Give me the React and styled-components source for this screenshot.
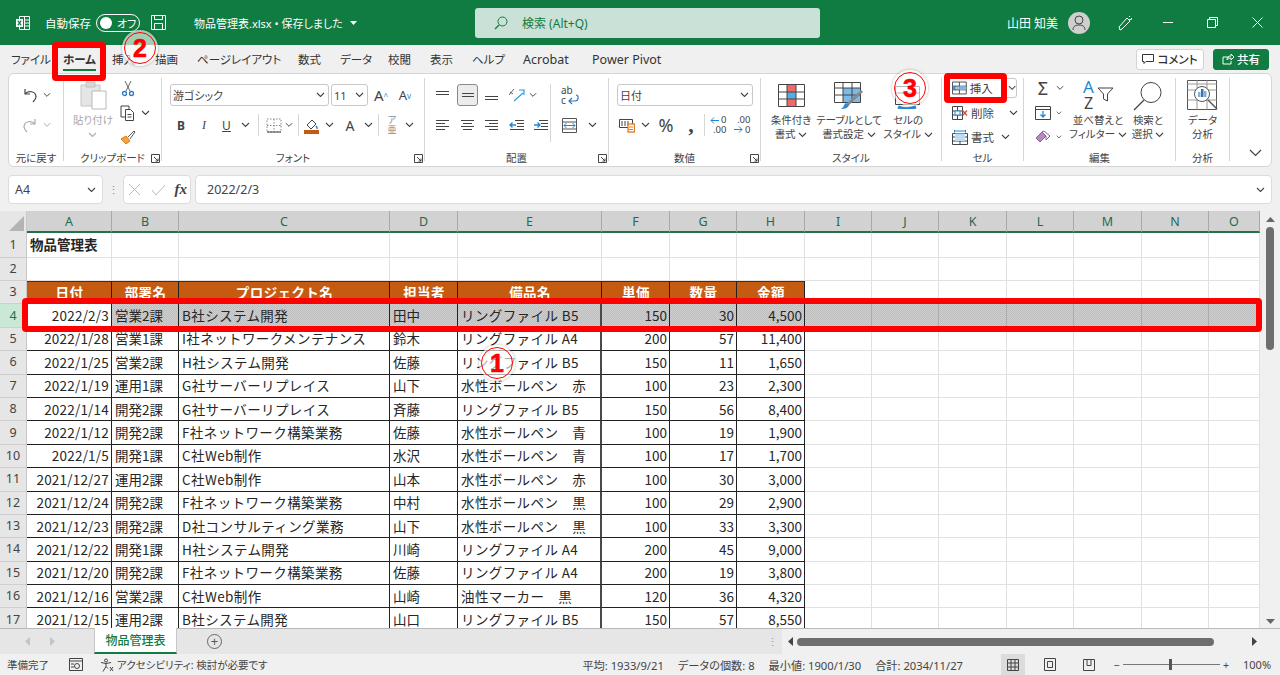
import React from 'react';
import styled, { createGlobalStyle } from 'styled-components';

const FONT = '"Noto Sans", "Noto Sans CJK JP", sans-serif';
const GRID_FONT = '"Noto Sans CJK JP", sans-serif';
const GREEN = '#107c41';
const RED = '#ff0000';

const COLUMNS = ['A', 'B', 'C', 'D', 'E', 'F', 'G', 'H', 'I', 'J', 'K', 'L', 'M', 'N', 'O'];
const HEADERS = ['日付', '部署名', 'プロジェクト名', '担当者', '備品名', '単価', '数量', '金額'];
const ROWS = [
  ['2022/2/3', '営業2課', 'B社システム開発', '田中', 'リングファイル B5', '150', '30', '4,500'],
  ['2022/1/28', '営業1課', 'I社ネットワークメンテナンス', '鈴木', 'リングファイル A4', '200', '57', '11,400'],
  ['2022/1/25', '営業2課', 'H社システム開発', '佐藤', 'リングファイル B5', '150', '11', '1,650'],
  ['2022/1/19', '運用1課', 'G社サーバーリプレイス', '山下', '水性ボールペン　赤', '100', '23', '2,300'],
  ['2022/1/14', '開発2課', 'G社サーバーリプレイス', '斉藤', 'リングファイル B5', '150', '56', '8,400'],
  ['2022/1/12', '開発2課', 'F社ネットワーク構築業務', '佐藤', '水性ボールペン　青', '100', '19', '1,900'],
  ['2022/1/5', '開発1課', 'C社Web制作', '水沢', '水性ボールペン　青', '100', '17', '1,700'],
  ['2021/12/27', '運用2課', 'C社Web制作', '山本', '水性ボールペン　赤', '100', '30', '3,000'],
  ['2021/12/24', '開発2課', 'F社ネットワーク構築業務', '中村', '水性ボールペン　黒', '100', '29', '2,900'],
  ['2021/12/23', '開発2課', 'D社コンサルティング業務', '山下', '水性ボールペン　黒', '100', '33', '3,300'],
  ['2021/12/22', '開発1課', 'H社システム開発', '川崎', 'リングファイル A4', '200', '45', '9,000'],
  ['2021/12/20', '開発2課', 'F社ネットワーク構築業務', '佐藤', 'リングファイル A4', '200', '19', '3,800'],
  ['2021/12/16', '営業2課', 'C社Web制作', '山崎', '油性マーカー　黒', '120', '36', '4,320'],
  ['2021/12/15', '運用2課', 'B社システム開発', '山口', 'リングファイル B5', '150', '57', '8,550'],
];
const RIGHT_ALIGNED = [0, 5, 6, 7];
const TABS = [
  ['ファイル', 52], ['ホーム', 49], ['挿入', 43], ['描画', 42], ['ページ レイアウト', 101], ['数式', 42],
  ['データ', 48], ['校閲', 42], ['表示', 42], ['ヘルプ', 51], ['Acrobat', 69, true], ['Power Pivot', 80, true],
];

const GlobalStyle = createGlobalStyle`
  html, body { margin: 0; padding: 0; background: #f0f0f0; }
  body { font-family: ${FONT}; }
`;

/* icons */
const Chev = ({ c = '#444' }) => (
  <svg width="9" height="6" viewBox="0 0 9 6"><path d="M1 1l3.5 3.5L8 1" fill="none" stroke={c} strokeWidth="1.1" /></svg>
);
const I = ({ w = 16, h = 16, children }) => (
  <svg width={w} height={h} viewBox={`0 0 ${w} ${h}`} fill="none" stroke="#444" strokeWidth="1">{children}</svg>
);
const Launcher = () => (
  <I w={9} h={9}><path d="M.5 8.5v-8h8v8zM3 3l4 4M7 4.5V7H4.5" strokeWidth="1" /></I>
);
const Lines = ({ rows }) => (
  <I w={16} h={14}>{rows.map(([y, x1, x2]) => <path key={y} d={`M${x1} ${y}.5H${x2}`} />)}</I>
);
const ExcelLogo = () => (
  <svg width="16" height="16" viewBox="0 0 16 16" fill="none" stroke="#fff">
    <path d="M4.5 1.5h10v13h-10zM9.5 1.5v13M9.5 5h5M9.5 8h5M9.5 11h5" />
    <rect x="1" y="4" width="7" height="8" fill="#fff" stroke="none" />
    <path d="M2.8 5.6l3.4 4.8M6.2 5.6l-3.4 4.8" stroke={GREEN} strokeWidth="1.2" />
  </svg>
);
const SaveIcon = () => (
  <svg width="15" height="15" viewBox="0 0 15 15" fill="none" stroke="#fff">
    <path d="M.5.5h14v14H.5zM3.5.5v4h8v-4M3.5 14.5v-6h8v6" />
  </svg>
);

const PasteIcon = () => (
  <svg width="27" height="29" viewBox="0 0 27 29" fill="none">
    <path d="M1 4h19v21H1z" fill="#e6e6e6" stroke="#c4c4c4" />
    <path d="M6 1h9v5H6z" fill="#d8d8d8" stroke="#c0c0c0" />
    <path d="M12 10h14v18H12z" fill="#fff" stroke="#b8b8b8" />
  </svg>
);
const CutIcon = () => (
  <I w={14} h={17}>
    <path d="M4 1l5 10M10 1L5 11" stroke="#666" />
    <circle cx="3.5" cy="13.5" r="2" stroke="#2b78c6" strokeWidth="1.3" />
    <circle cx="10.5" cy="13.5" r="2" stroke="#2b78c6" strokeWidth="1.3" />
  </I>
);
const CopyIcon = () => (
  <I w={16} h={16}>
    <path d="M1 1h8v11H1z" /><path d="M5.5 4.5h5l3 3v8h-8z" fill="#fff" /><path d="M7.5 9.5h4M7.5 12h4" />
  </I>
);
const BrushIcon = () => (
  <I w={16} h={16}>
    <path d="M1 10l5-3 4 5-4 3z" fill="#f3a33b" stroke="#d9791a" />
    <path d="M8 8l6-6 1 1-5 7" stroke="#555" />
  </I>
);
const BordersIcon = () => (
  <I w={16} h={15}>
    <path d="M1 1h14v13H1zM8 1v13M1 7.500h14" stroke="#888" strokeDasharray="1.5 1.5" />
    <path d="M1 14h14" stroke="#444" />
  </I>
);
const FillIcon = () => (
  <I w={16} h={17}>
    <path d="M3 8l5-5 4 4-5 5z" />
    <path d="M12 9c1 1.500 1.500 2 1 3" stroke="#2b78c6" strokeWidth="1.4" />
    <rect x="0" y="13" width="15" height="4" fill="#c55a11" stroke="none" />
  </I>
);
const RubyIcon = () => (
  <span style={{ fontSize: 9, lineHeight: '10px', color: '#888', textAlign: 'center' }}>ア<br />亜</span>
);
const OrientIcon = () => (
  <I w={17} h={16}>
    <path d="M3 11L12 3" stroke="#2b9ad6" strokeWidth="1.2" transform="translate(3 3)" />
    <path d="M11 3h5v5" stroke="#2b9ad6" strokeWidth="1.2" />
    <path d="M1 8l5-6M2 5l3 2" stroke="#666" />
  </I>
);
const IndentIcon = ({ out }) => (
  <I w={15} h={12}>
    <path d="M6 1.500h9M8 4.500h7M8 7.500h7M1 10.500h14" />
    <path d={out ? 'M7 6H1M3.500 3.500L1 6l2.500 2.500' : 'M1 6h6M4.500 3.500L7 6 4.500 8.500'} stroke="#1e88d8" strokeWidth="1.3" />
  </I>
);
const WrapIcon = () => (
  <span style={{ fontSize: 10, lineHeight: '10px', color: '#444', position: 'relative', width: 18, height: 20 }}>
    ab<br />c
    <svg width="12" height="11" viewBox="0 0 12 11" fill="none" stroke="#2b78c6" strokeWidth="1.2" style={{ position: 'absolute', right: 0, bottom: 0 }}>
      <path d="M9 1c3 0 3 6-1 6H2M5 4L2 7l3 3" />
    </svg>
  </span>
);
const MergeIcon = () => (
  <I w={15} h={15}>
    <path d="M.5 .5h14v14H.5zM.5 4h14M.5 11h14" stroke="#555" />
    <path d="M2 7.500h11M4.500 5L2 7.500 4.500 10M10.500 5L13 7.500 10.500 10" stroke="#1e88d8" />
  </I>
);
const MoneyIcon = () => (
  <I w={16} h={16}>
    <path d="M.5 2.500h13v8H.5z" /><path d="M3 4v5M6 4v5M9 4v5" />
    <rect x="9" y="7" width="6.500" height="8" fill="#fff" stroke="#e07a1f" strokeWidth="1.300" />
    <path d="M10 10h4M10 12.500h4" stroke="#e07a1f" />
  </I>
);
const DecimalIcon = ({ inc }) => (
  <span style={{ position: 'relative', width: 17, height: 20, fontSize: 9.5, lineHeight: '10px', color: '#444', textAlign: 'right', display: 'block' }}>
    {inc ? <>0<br />.00</> : <>.00<br />0</>}
    <svg width="9" height="7" viewBox="0 0 9 7" fill="none" stroke="#1e88d8" style={{ position: 'absolute', left: 0, top: inc ? 2 : 11 }}>
      <path d={inc ? 'M9 3.500H1M4 .5L1 3.500 4 6.500' : 'M0 3.500h8M5 .5l3 3-3 3'} />
    </svg>
  </span>
);
const CondIcon = () => (
  <svg width="27" height="23" viewBox="0 0 27 23" fill="none">
    <rect x="9" y="1" width="9" height="7" fill="#f06a6a" />
    <rect x="9" y="8" width="9" height="7" fill="#5fa8e0" />
    <rect x="9" y="15" width="9" height="7" fill="#f06a6a" />
    <path d="M.5.5h26v22H.5zM9 .5v22M18 .5v22M.5 8h26M.5 15h26" stroke="#444" />
  </svg>
);
const TableIcon = () => (
  <svg width="30" height="28" viewBox="0 0 30 28" fill="none">
    <rect x="9" y="6" width="18" height="14" fill="#7cbbe8" />
    <path d="M.5.5h26v20H.5zM9 .5v20M18 .5v20M.5 6h26M.5 13h26" stroke="#444" />
    <path d="M28 9L13 23" stroke="#888" strokeWidth="3" />
    <path d="M15 23c-1 3-4 4-8 4 2-1 3-3 4-6z" fill="#2b88d8" />
  </svg>
);
const CellStyleIcon = () => (
  <svg width="26" height="26" viewBox="0 0 26 26" fill="none">
    <path d="M.5 3.500h24v18H.5zM.5 10h24" stroke="#444" />
    <path d="M3 24c5 2 12 2 18 0" stroke="#2b88d8" strokeWidth="3" />
  </svg>
);
const InsertIcon = () => (
  <I w={16} h={14}>
    <path d="M.5 .5h15v13H.5zM8 .5v13M.5 5h15M.5 9h15" />
    <rect x="8" y="5" width="7" height="4" fill="#79b8e6" stroke="none" />
    <path d="M7 7H1.500M4 4.500L1.500 7 4 9.500" stroke="#1e88d8" strokeWidth="1.200" />
  </I>
);
const DeleteIcon = () => (
  <I w={16} h={14}>
    <path d="M.5 .5h10v13H.5zM.5 5h10M.5 9h10M5.500 .5v13" />
    <rect x="3" y="5" width="5" height="4" fill="#fff" stroke="#1e88d8" />
    <path d="M10.500 4.500l4.500 5M15 4.500l-4.500 5" stroke="#d9472b" strokeWidth="1.200" />
  </I>
);
const FormatIcon = () => (
  <I w={16} h={16}>
    <path d="M.5 4.500h15v11H.5zM.5 8h15M.5 12h15M8 4.500v11" />
    <rect x="3" y="4.500" width="10" height="7.500" fill="#bcdcf4" stroke="none" />
    <path d="M2.500 1v2.500M13.500 1v2.500M2.500 2h11" stroke="#1e88d8" />
  </I>
);
const FillDownIcon = () => (
  <I w={16} h={14}>
    <path d="M.5 .5h15v13H.5zM.5 3.500h15" />
    <path d="M8 5v6M5.500 8.500L8 11l2.500-2.500" stroke="#1e88d8" strokeWidth="1.300" />
  </I>
);
const EraserIcon = () => (
  <svg width="16" height="14" viewBox="0 0 16 14" fill="none">
    <path d="M1 8l6-6 4 4-6 6z" fill="#b48ac0" stroke="#8c5d9c" />
    <path d="M7 2l2-1 6 5-4 4-0-4z" fill="#fff" stroke="#8c5d9c" />
  </svg>
);
const SortIcon = () => (
  <span style={{ position: 'relative', width: 30, height: 30, display: 'block' }}>
    <span style={{ position: 'absolute', left: 0, top: -3, fontSize: 17, lineHeight: '17px', color: '#1e88d8' }}>A</span>
    <span style={{ position: 'absolute', left: 1, top: 14, fontSize: 16, lineHeight: '17px', color: '#444' }}>Z</span>
    <svg width="17" height="16" viewBox="0 0 17 16" fill="none" stroke="#444" style={{ position: 'absolute', left: 14, top: 6 }}>
      <path d="M1 1h15l-5.500 6v7l-4-2V7z" />
    </svg>
  </span>
);
const FindIcon = () => (
  <svg width="30" height="30" viewBox="0 0 30 30" fill="none" stroke="#444">
    <circle cx="18" cy="11.500" r="10" />
    <path d="M11 19L1 29" strokeWidth="1.300" />
  </svg>
);
const AnalysisIcon = () => (
  <svg width="31" height="31" viewBox="0 0 31 31" fill="none" stroke="#555">
    <path d="M.5 .5h29v29H.5z" />
    <path d="M.5 4h29M.5 10h29M.5 20h29M10 .5v29M20 .5v29" stroke="#999" />
    <circle cx="15" cy="14" r="7.500" fill="#fff" />
    <rect x="11" y="12" width="2.500" height="5" fill="#88b0d0" stroke="none" />
    <rect x="14" y="9" width="2.500" height="8" fill="#2b78c6" stroke="none" />
    <rect x="17" y="11" width="2.500" height="6" fill="#88b0d0" stroke="none" />
    <path d="M21 20l9 9" strokeWidth="1.400" />
  </svg>
);

/* page */
const Page = styled.div`
  position: relative;
  width: 1280px;
  height: 675px;
  overflow: hidden;
  display: flex;
  flex-direction: column;
  background: #f0f0f0;
  color: #333;
  font-family: ${FONT};
  font-feature-settings: "palt";
`;

const TitleBar = styled.header`
  height: 45px;
  flex: none;
  display: flex;
  align-items: center;
  background: ${GREEN};
  color: #fff;
  font-size: 11.5px;
`;
const TitleLeft = styled.div`
  width: 475px;
  flex: none;
  display: flex;
  align-items: center;
  padding-left: 15px;
  box-sizing: border-box;
`;
const AutoSave = styled.span`
  margin-left: 14px;
  width: 51px;
  white-space: nowrap;
`;
const Toggle = styled.span`
  width: 44px;
  height: 18px;
  flex: none;
  box-sizing: border-box;
  border: 1px solid #fff;
  border-radius: 9px;
  display: flex;
  align-items: center;
  gap: 5px;
  padding-left: 3px;
  font-size: 11px;
  white-space: nowrap;
  &::before {
    content: '';
    width: 12px;
    height: 12px;
    flex: none;
    border-radius: 50%;
    background: #fff;
  }
`;
const SaveSlot = styled.span`
  margin: 0 28px 0 11px;
  display: flex;
`;
const FileName = styled.span`
  white-space: nowrap;
  display: flex;
  align-items: center;
  gap: 7px;
  font-size: 11px;
`;
const SearchBox = styled.div`
  width: 345px;
  height: 30px;
  flex: none;
  display: flex;
  align-items: center;
  gap: 14px;
  padding-left: 19px;
  box-sizing: border-box;
  border-radius: 3px;
  background: #c9e1d6;
  color: ${GREEN};
  font-size: 12px;
`;
const TitleRight = styled.div`
  flex: 1;
  display: flex;
  align-items: center;
  justify-content: flex-end;
`;
const UserName = styled.span`
  font-size: 12px;
  margin-right: 10px;
`;
const Avatar = styled.span`
  width: 22px;
  height: 22px;
  border-radius: 50%;
  background: #cfcfcf;
  display: flex;
  align-items: center;
  justify-content: center;
  margin-right: 19px;
`;
const WinSlot = styled.span`
  width: ${(p) => p.$w}px;
  margin-left: ${(p) => p.$ml || 0}px;
  display: flex;
  justify-content: center;
`;

const TabBar = styled.nav`
  height: 28px;
  flex: none;
  display: flex;
  align-items: center;
  padding-left: 11px;
  padding-right: 11px;
  font-size: 11.5px;
`;
const TabSlot = styled.span`
  width: ${(p) => p.$w}px;
  flex: none;
`;
const Tab = styled.span`
  position: relative;
  display: inline-block;
  white-space: nowrap;
  color: #333;
  font-size: ${(p) => (p.$latin ? '12.5px' : '11.5px')};
  word-spacing: ${(p) => (p.$latin ? 'normal' : '-3px')};
  font-weight: ${(p) => (p.$active ? 700 : 400)};
  &::after {
    content: ${(p) => (p.$active ? "''" : 'none')};
    position: absolute;
    left: 0;
    right: 0;
    bottom: -4px;
    height: 2px;
    background: ${GREEN};
  }
`;
const TabActions = styled.div`
  margin-left: auto;
  display: flex;
  gap: 9px;
`;
const CommentBtn = styled.span`
  width: 68px;
  height: 21px;
  box-sizing: border-box;
  display: flex;
  align-items: center;
  justify-content: center;
  gap: 3px;
  background: #fff;
  border: 1px solid #d4d4d4;
  border-radius: 3px;
  font-size: 11.5px;
  font-weight: 500;
`;
const ShareBtn = styled(CommentBtn)`
  width: 56px;
  background: ${GREEN};
  border-color: ${GREEN};
  color: #fff;
`;

const Ribbon = styled.section`
  height: 94px;
  flex: none;
  margin: 0 8px;
  box-sizing: border-box;
  display: flex;
  background: #fff;
  border: 1px solid #d6d6d6;
  border-radius: 6px;
`;
const Group = styled.div`
  position: relative;
  width: ${(p) => p.$w}px;
  flex: none;
  display: flex;
  flex-direction: column;
`;
const GroupBody = styled.div`
  flex: 1;
  display: flex;
  min-height: 0;
`;
const GroupLabel = styled.div`
  height: 16px;
  line-height: 16px;
  flex: none;
  text-align: center;
  font-size: 10.5px;
  color: #444;
  white-space: nowrap;
`;
const LauncherSlot = styled.span`
  position: absolute;
  right: 1px;
  bottom: 3px;
  display: flex;
`;
const GroupSep = styled.div`
  width: 1px;
  flex: none;
  margin: 4px 0 5px;
  background: #d6d6d6;
`;
const Double = styled.div`
  display: grid;
  grid-template-rows: 30px 30px;
  padding-top: 6px;
  padding-left: ${(p) => p.$pl || 0}px;
  width: ${(p) => (p.$w ? `${p.$w}px` : 'auto')};
  box-sizing: border-box;
  align-content: start;
`;
const Triple = styled.div`
  display: grid;
  grid-template-rows: repeat(3, 24.5px);
  padding-top: 2px;
  padding-left: ${(p) => p.$pl || 0}px;
  align-content: start;
`;
const Row = styled.div`
  display: flex;
  align-items: center;
`;
const Slot = styled.span`
  width: ${(p) => p.$w}px;
  flex: none;
  display: flex;
  align-items: center;
  justify-content: center;
  color: #444;
  font-size: ${(p) => p.$fs || 12}px;
  font-weight: ${(p) => (p.$bold ? 700 : 400)};
  font-style: ${(p) => (p.$it ? 'italic' : 'normal')};
  font-family: ${(p) => (p.$serif ? '"Liberation Serif", serif' : 'inherit')};
  text-decoration: ${(p) => (p.$u ? 'underline' : 'none')};
`;
const Up = styled.sup`
  font-size: 8px;
  color: #1e88d8;
`;
const ToolSep = styled.span`
  width: ${(p) => p.$w}px;
  height: 22px;
  flex: none;
  display: flex;
  justify-content: center;
  &::before {
    content: '';
    width: 1px;
    background: #d6d6d6;
  }
`;
const Large = styled.div`
  width: ${(p) => p.$w}px;
  margin-left: ${(p) => p.$ml || 0}px;
  flex: none;
  display: flex;
  flex-direction: column;
  align-items: center;
  padding-top: 4px;
  color: ${(p) => (p.$off ? '#aaa' : '#444')};
`;
const LargeIcon = styled.div`
  height: 35px;
  display: flex;
  align-items: center;
  justify-content: center;
`;
const LargeText = styled.div`
  font-size: 10.5px;
  line-height: 14px;
  text-align: center;
  white-space: nowrap;
`;
const Combo = styled.div`
  width: ${(p) => p.$w}px;
  margin-right: ${(p) => p.$mr || 0}px;
  height: 22px;
  flex: none;
  box-sizing: border-box;
  display: flex;
  align-items: center;
  justify-content: space-between;
  padding: 0 3px 0 2px;
  border: 1px solid #c8c8c8;
  border-radius: 3px;
  font-size: 11px;
  color: #444;
  white-space: nowrap;
`;
const Pressed = styled.span`
  width: 21px;
  height: 22px;
  box-sizing: border-box;
  display: flex;
  align-items: center;
  justify-content: center;
  background: #ececec;
  border: 1px solid #8a8a8a;
  border-radius: 3px;
`;
const VLine = styled.div`
  width: 1px;
  height: 58px;
  margin-top: 10px;
  flex: none;
  background: #d6d6d6;
`;
const CellRow = styled.div`
  display: flex;
  align-items: center;
  padding-left: ${(p) => p.$pl}px;
  font-size: 11.5px;
  color: #444;
`;
const CellText = styled.span`
  margin: 0 ${(p) => p.$mr}px 0 3px;
  white-space: nowrap;
`;
const InsertBox = styled.div`
  width: 70px;
  height: 20px;
  margin-left: 5px;
  box-sizing: border-box;
  display: flex;
  align-items: center;
  padding-left: 4px;
  border: 1px solid #c8c8c8;
  border-radius: 3px;
  font-size: 11.5px;
  color: #444;
`;
const Collapse = styled.div`
  flex: 1;
  display: flex;
  align-items: flex-end;
  justify-content: flex-end;
  padding: 0 9px 9px 0;
`;

const FormulaBar = styled.div`
  height: 44px;
  flex: none;
  box-sizing: border-box;
  padding: 8px 8px 7px;
  display: flex;
  align-items: stretch;
  font-size: 12.5px;
  color: #444;
`;
const NameBox = styled.div`
  width: 95px;
  box-sizing: border-box;
  display: flex;
  align-items: center;
  justify-content: space-between;
  padding: 0 6px;
  background: #fff;
  border: 1px solid #dcdcdc;
  border-radius: 4px;
`;
const Grip = styled.span`
  width: 20px;
  display: flex;
  align-items: center;
  justify-content: center;
  color: #888;
  font-size: 11px;
`;
const FxBox = styled.div`
  width: 68px;
  box-sizing: border-box;
  display: flex;
  align-items: center;
  justify-content: space-between;
  padding: 0 3px 0 4px;
  background: #fff;
  border: 1px solid #dcdcdc;
  border-radius: 4px;
  margin-right: 4px;
`;
const Fx = styled.i`
  font-family: "Liberation Serif", serif;
  font-size: 15px;
  font-weight: 700;
  color: #444;
`;
const FormulaInput = styled(NameBox)`
  flex: 1;
  padding: 0 6px 0 11px;
`;

const SheetArea = styled.div`
  height: 417px;
  flex: none;
  display: flex;
  background: #fff;
`;
const Sheet = styled.div`
  width: 1260px;
  height: 417px;
  overflow: hidden;
  display: grid;
  grid-template-columns: 27px 85px 67px 211px 68px 144px 68px 67px 68px 67px 67px 68px 67px 68px 67px 51px;
  grid-template-rows: 22px 24.6px repeat(16, 23.4px);
  font-family: ${GRID_FONT};
  font-feature-settings: normal;
  font-size: 13.5px;
  color: #262626;
`;
const Corner = styled.div`
  background: #e6e6e6;
  border-right: 1px solid #c8c8c8;
  box-sizing: border-box;
  position: relative;
  &::after {
    content: '';
    position: absolute;
    right: 2px;
    bottom: 2px;
    border-style: solid;
    border-width: 0 0 15px 15px;
    border-color: transparent transparent #b4b4b4 transparent;
  }
`;
const ColHead = styled.div`
  background: #d2d2d2;
  border-right: 1px solid #a8a8a8;
  border-bottom: 2px solid #217346;
  box-sizing: border-box;
  display: flex;
  align-items: center;
  justify-content: center;
  font-family: ${FONT};
  font-size: 12.5px;
  color: #1f6b4c;
`;
const RowHead = styled.div`
  background: ${(p) => (p.$sel ? '#c9e8d6' : '#e6e6e6')};
  color: ${(p) => (p.$sel ? '#217346' : '#444')};
  border-right: 1px solid ${(p) => (p.$sel ? '#217346' : '#c8c8c8')};
  border-bottom: 1px solid #cfcfcf;
  box-sizing: border-box;
  display: flex;
  align-items: center;
  justify-content: center;
  padding-bottom: 1px;
  font-family: ${FONT};
  font-size: 12.5px;
`;
const DOTS = 'repeating-conic-gradient(#bcbcbc 0 25%, #d0d0d0 0 50%) 0 0/2px 2px';
const KIND = {
  plain: 'background:#fff;border-right:1px solid #e1e1e1;border-bottom:1px solid #e1e1e1;',
  head: 'background:#c55a11;color:#fff;font-weight:700;border-right:1px solid #222;border-bottom:1px solid #222;box-shadow:inset 0 1px #333;',
  data: 'background:#fff;border-right:1px solid #222;border-bottom:1px solid #222;',
  sel: `background:${DOTS};border-right:1px solid #222;border-bottom:1px solid #222;`,
  selPlain: `background:${DOTS};border-right:1px solid #acacac;border-bottom:1px solid #acacac;`,
  active: 'background:#fff;border-right:1px solid #222;border-bottom:1px solid #222;',
};
const Cell = styled.div`
  ${(p) => KIND[p.$kind]}
  ${(p) => (p.$thick ? 'border-right: 2px solid #4a4a4a;' : '')}
  box-sizing: border-box;
  display: flex;
  align-items: center;
  justify-content: ${(p) => p.$justify || 'flex-start'};
  padding: 0 2px 1px 3px;
  white-space: nowrap;
  font-weight: ${(p) => (p.$bold ? 700 : undefined)};
  letter-spacing: ${(p) => p.$spacing || 'normal'};
`;
const VScroll = styled.div`
  width: 20px;
  flex: none;
  display: flex;
  flex-direction: column;
  align-items: center;
  background: #f0f0f0;
  padding-top: 5px;
  box-sizing: border-box;
  height: 417px;
`;
const VThumb = styled.div`
  width: 8px;
  height: 123px;
  margin-top: 5px;
  border-radius: 4px;
  background: #6e6e6e;
`;
const VSpace = styled.div`
  flex: 1;
`;

const SheetTabs = styled.div`
  height: 26px;
  flex: none;
  display: flex;
  align-items: stretch;
  background: #e6e6e6;
  border-top: 1px solid #b8b8b8;
  box-sizing: border-box;
  font-size: 12px;
`;
const NavArrows = styled.div`
  width: 94px;
  display: flex;
  align-items: center;
  gap: 20px;
  padding-left: 24px;
  box-sizing: border-box;
`;
const SheetTab = styled.div`
  width: 83px;
  margin-top: -1px;
  box-sizing: border-box;
  display: flex;
  align-items: center;
  justify-content: center;
  background: #fff;
  border-bottom: 2px solid ${GREEN};
  border-right: 1px solid #c8c8c8;
  border-left: 1px solid #c8c8c8;
  color: ${GREEN};
  font-weight: 500;
  font-size: 12px;
`;
const AddSheet = styled.div`
  margin-left: 30px;
  width: 15px;
  height: 15px;
  align-self: center;
  box-sizing: border-box;
  border: 1px solid #666;
  border-radius: 50%;
  display: flex;
  align-items: center;
  justify-content: center;
  color: #555;
  font-size: 13px;
  line-height: 1;
`;
const TabGrip = styled.div`
  margin-left: auto;
  width: 20px;
  display: flex;
  align-items: center;
  justify-content: center;
  color: #999;
  font-size: 11px;
`;
const HScroll = styled.div`
  width: 498px;
  display: flex;
  align-items: center;
  gap: 4px;
  padding: 0 22px 0 5px;
  box-sizing: border-box;
  background: #f0f0f0;
`;
const HThumb = styled.div`
  flex: 1;
  height: 8px;
  border-radius: 4px;
  background: #6e6e6e;
`;
const ArrowRight = styled.svg`
  margin-left: 34px;
`;

const StatusBar = styled.footer`
  height: 21px;
  flex: none;
  display: flex;
  align-items: center;
  font-size: 10.5px;
  color: #444;
  padding-left: 7px;
  white-space: nowrap;
`;
const StatusIcon = styled.span`
  display: flex;
  margin-left: ${(p) => p.$ml}px;
  margin-right: ${(p) => p.$mr || 0}px;
`;
const StatusRight = styled.div`
  margin-left: auto;
  display: flex;
  align-items: center;
  height: 100%;
`;
const Stats = styled.div`
  display: flex;
  gap: 14px;
  margin-right: 38px;
  font-size: 11.2px;
`;
const ViewBtn = styled.span`
  width: ${(p) => p.$w}px;
  height: 100%;
  display: flex;
  align-items: center;
  justify-content: center;
  background: ${(p) => (p.$active ? '#dcdcdc' : 'transparent')};
`;
const ZoomSign = styled.span`
  margin-left: ${(p) => p.$ml || 0}px;
`;
const Slider = styled.div`
  position: relative;
  width: 97px;
  height: 1px;
  background: #777;
  margin: 0 3px;
  &::after {
    content: '';
    position: absolute;
    left: 46px;
    top: -5px;
    width: 3px;
    height: 11px;
    background: #555;
  }
`;
const Zoom = styled.span`
  width: 51px;
  text-align: left;
  padding-left: 14px;
  box-sizing: border-box;
  font-size: 11px;
`;

/* annotations lying over the screenshot */
const RedFrame = styled.div`
  position: absolute;
  left: ${(p) => p.$x}px;
  top: ${(p) => p.$y}px;
  width: ${(p) => p.$w}px;
  height: ${(p) => p.$h}px;
  box-sizing: border-box;
  border: 6px solid ${RED};
  border-radius: 4px;
`;
const Badge = styled.div`
  position: absolute;
  left: ${(p) => p.$x - 18}px;
  top: ${(p) => p.$y - 18}px;
  width: 36px;
  height: 36px;
  box-sizing: border-box;
  border-radius: 50%;
  background: rgba(255, 255, 255, 0.62);
  box-shadow: 0 0 3px rgba(0, 0, 0, 0.3);
  display: flex;
  align-items: center;
  justify-content: center;
  &::before {
    content: '';
    position: absolute;
    inset: 2px;
    border-radius: 50%;
    border: 1.5px solid ${RED};
  }
  color: ${RED};
  font-family: "Liberation Sans", sans-serif;
  font-weight: 700;
  font-size: 25px;
  -webkit-text-stroke: 0.6px ${RED};
`;

function SheetGrid() {
  return (
    <Sheet>
      <Corner />
      {COLUMNS.map((c) => <ColHead key={c}>{c}</ColHead>)}

      <RowHead>1</RowHead>
      {COLUMNS.map((c, i) => <Cell key={c} $kind="plain" $bold={i === 0}>{i === 0 ? '物品管理表' : ''}</Cell>)}
      <RowHead>2</RowHead>
      {COLUMNS.map((c) => <Cell key={c} $kind="plain" />)}
      <RowHead>3</RowHead>
      {COLUMNS.map((c, i) => (
        <Cell key={c} $kind={i < 8 ? 'head' : 'plain'} $justify="center" $spacing="0.4px">{HEADERS[i]}</Cell>
      ))}

      {ROWS.map((row, r) => (
        <React.Fragment key={row[0]}>
          <RowHead $sel={r === 0}>{r + 4}</RowHead>
          {COLUMNS.map((c, i) => {
            let kind = i < 8 ? 'data' : 'plain';
            if (r === 0) kind = i === 0 ? 'active' : i < 8 ? 'sel' : 'selPlain';
            let spacing = 'normal';
            if (i === 2 || i === 4) spacing = '0.4px';
            if (i === 0) spacing = '0.2px';
            return (
              <Cell key={c} $kind={kind} $thick={i === 4} $justify={RIGHT_ALIGNED.includes(i) ? 'flex-end' : 'flex-start'} $spacing={spacing}>
                {row[i] || ''}
              </Cell>
            );
          })}
        </React.Fragment>
      ))}
    </Sheet>
  );
}

function RibbonPanel() {
  return (
    <Ribbon>
      <Group $w={54}>
        <GroupBody>
          <Double $pl={8}>
            <Row>
              <Slot $w={26}><I w={16} h={16}><path d="M3 2v5h5M3 7c3-4 11-3 11 3 0 2-1 3-3 5" strokeWidth="1.2" /></I></Slot>
              <Slot $w={8}><Chev /></Slot>
            </Row>
            <Row>
              <Slot $w={26}><I w={16} h={16}><path d="M13 2v5H8M13 7C10 3 2 4 2 10c0 2 1 3 3 5" stroke="#aaa" strokeWidth="1.2" /></I></Slot>
              <Slot $w={8}><Chev c="#aaa" /></Slot>
            </Row>
          </Double>
        </GroupBody>
        <GroupLabel>元に戻す</GroupLabel>
      </Group>
      <GroupSep />

      <Group $w={97}>
        <GroupBody>
          <Large $w={46} $ml={6} $off>
            <LargeIcon><PasteIcon /></LargeIcon>
            <LargeText>貼り付け<br /><Chev c="#aaa" /></LargeText>
          </Large>
          <Triple>
            <Row><Slot $w={24}><CutIcon /></Slot></Row>
            <Row><Slot $w={24}><CopyIcon /></Slot><Slot $w={10}><Chev /></Slot></Row>
            <Row><Slot $w={24}><BrushIcon /></Slot></Row>
          </Triple>
        </GroupBody>
        <GroupLabel>クリップボード</GroupLabel>
        <LauncherSlot><Launcher /></LauncherSlot>
      </Group>
      <GroupSep />

      <Group $w={262}>
        <GroupBody>
          <Double $pl={8}>
            <Row>
              <Combo $w={159} $mr={2}>游ゴシック<Chev /></Combo>
              <Combo $w={37}>11<Chev /></Combo>
              <Slot $w={26} $fs={15}>A<Up>^</Up></Slot>
              <Slot $w={22} $fs={13}>A<Up>v</Up></Slot>
            </Row>
            <Row>
              <Slot $w={22} $bold>B</Slot>
              <Slot $w={24} $it $serif>I</Slot>
              <Slot $w={21} $u>U</Slot>
              <Slot $w={17}><Chev /></Slot>
              <ToolSep $w={9} />
              <Slot $w={22}><BordersIcon /></Slot>
              <Slot $w={8}><Chev /></Slot>
              <ToolSep $w={10} />
              <Slot $w={18}><FillIcon /></Slot>
              <Slot $w={16}><Chev /></Slot>
              <Slot $w={26} $fs={14}>A</Slot>
              <Slot $w={10}><Chev /></Slot>
              <ToolSep $w={10} />
              <Slot $w={18}><RubyIcon /></Slot>
              <Slot $w={16}><Chev /></Slot>
            </Row>
          </Double>
        </GroupBody>
        <GroupLabel>フォント</GroupLabel>
        <LauncherSlot><Launcher /></LauncherSlot>
      </Group>
      <GroupSep />

      <Group $w={183}>
        <GroupBody>
          <Double $pl={6} $w={125}>
            <Row>
              <Slot $w={24.5}><Lines rows={[[3, 1, 14], [6, 1, 14]]} /></Slot>
              <Slot $w={24}><Pressed><Lines rows={[[5, 2, 14], [8, 2, 14]]} /></Pressed></Slot>
              <Slot $w={25}><Lines rows={[[8, 1, 14], [11, 1, 14]]} /></Slot>
              <Slot $w={24}><OrientIcon /></Slot>
              <Slot $w={8}><Chev /></Slot>
            </Row>
            <Row>
              <Slot $w={24.5}><Lines rows={[[2, 1, 14], [5, 1, 10], [8, 1, 14], [11, 1, 10]]} /></Slot>
              <Slot $w={24}><Lines rows={[[2, 1, 14], [5, 3, 12], [8, 1, 14], [11, 3, 12]]} /></Slot>
              <Slot $w={25}><Lines rows={[[2, 1, 14], [5, 5, 14], [8, 1, 14], [11, 5, 14]]} /></Slot>
              <Slot $w={24}><IndentIcon out /></Slot>
              <Slot $w={24}><IndentIcon /></Slot>
            </Row>
          </Double>
          <VLine />
          <Double>
            <Row><Slot $w={38}><WrapIcon /></Slot></Row>
            <Row><Slot $w={36}><MergeIcon /></Slot><Slot $w={10}><Chev /></Slot></Row>
          </Double>
        </GroupBody>
        <GroupLabel>配置</GroupLabel>
        <LauncherSlot><Launcher /></LauncherSlot>
      </Group>
      <GroupSep />

      <Group $w={151}>
        <GroupBody>
          <Double $pl={8}>
            <Row><Combo $w={136}>日付<Chev /></Combo></Row>
            <Row>
              <Slot $w={20}><MoneyIcon /></Slot>
              <Slot $w={16}><Chev /></Slot>
              <Slot $w={26} $fs={18}>%</Slot>
              <Slot $w={24} $fs={22} $bold $serif>,</Slot>
              <ToolSep $w={2} />
              <Slot $w={26}><DecimalIcon inc /></Slot>
              <Slot $w={22}><DecimalIcon /></Slot>
            </Row>
          </Double>
        </GroupBody>
        <GroupLabel>数値</GroupLabel>
        <LauncherSlot><Launcher /></LauncherSlot>
      </Group>
      <GroupSep />

      <Group $w={180}>
        <GroupBody>
          <Large $w={60}>
            <LargeIcon><CondIcon /></LargeIcon>
            <LargeText>条件付き<br />書式 <Chev /></LargeText>
          </Large>
          <Large $w={56}>
            <LargeIcon><TableIcon /></LargeIcon>
            <LargeText>テーブルとして<br />書式設定 <Chev /></LargeText>
          </Large>
          <Large $w={62}>
            <LargeIcon><CellStyleIcon /></LargeIcon>
            <LargeText>セルの<br />スタイル <Chev /></LargeText>
          </Large>
        </GroupBody>
        <GroupLabel>スタイル</GroupLabel>
      </Group>
      <GroupSep />

      <Group $w={81}>
        <GroupBody>
          <Triple>
            <Row>
              <InsertBox>
                <InsertIcon />
                <CellText $mr={15}>挿入</CellText>
                <Chev />
              </InsertBox>
            </Row>
            <CellRow $pl={10}><DeleteIcon /><CellText $mr={15}>削除</CellText><Chev /></CellRow>
            <CellRow $pl={10}><FormatIcon /><CellText $mr={7}>書式</CellText><Chev /></CellRow>
          </Triple>
        </GroupBody>
        <GroupLabel>セル</GroupLabel>
      </Group>
      <GroupSep />

      <Group $w={151}>
        <GroupBody>
          <Triple $pl={6}>
            <Row><Slot $w={26} $fs={18}>Σ</Slot><Slot $w={8}><Chev /></Slot></Row>
            <Row><Slot $w={26}><FillDownIcon /></Slot><Slot $w={6}><Chev /></Slot></Row>
            <Row><Slot $w={26}><EraserIcon /></Slot><Slot $w={6}><Chev /></Slot></Row>
          </Triple>
          <Large $w={68}>
            <LargeIcon><SortIcon /></LargeIcon>
            <LargeText>並べ替えと<br />フィルター <Chev /></LargeText>
          </Large>
          <Large $w={32}>
            <LargeIcon><FindIcon /></LargeIcon>
            <LargeText>検索と<br />選択 <Chev /></LargeText>
          </Large>
        </GroupBody>
        <GroupLabel>編集</GroupLabel>
      </Group>
      <GroupSep />

      <Group $w={53}>
        <GroupBody>
          <Large $w={53}>
            <LargeIcon><AnalysisIcon /></LargeIcon>
            <LargeText>データ<br />分析</LargeText>
          </Large>
        </GroupBody>
        <GroupLabel>分析</GroupLabel>
      </Group>
      <GroupSep />
      <Collapse><svg width="13" height="8" viewBox="0 0 13 8"><path d="M1 1l5.500 5.500L12 1" fill="none" stroke="#444" strokeWidth="1.200" /></svg></Collapse>
    </Ribbon>
  );
}

export default function App() {
  return (
    <Page>
      <GlobalStyle />
      <TitleBar>
        <TitleLeft>
          <ExcelLogo />
          <AutoSave>自動保存</AutoSave>
          <Toggle>オフ</Toggle>
          <SaveSlot><SaveIcon /></SaveSlot>
          <FileName>
            物品管理表.xlsx • 保存しました
            <svg width="7" height="4"><path d="M0 0h7L3.500 4z" fill="#fff" /></svg>
          </FileName>
        </TitleLeft>
        <SearchBox>
          <svg width="14" height="14" viewBox="0 0 14 14" fill="none" stroke={GREEN}><circle cx="8.500" cy="5.500" r="4.500" /><path d="M5 9l-4 4" strokeWidth="1.200" /></svg>
          検索 (Alt+Q)
        </SearchBox>
        <TitleRight>
          <UserName>山田 知美</UserName>
          <Avatar>
            <svg width="14" height="16" viewBox="0 0 14 16" fill="none" stroke="#444"><circle cx="7" cy="5" r="4" /><path d="M1 15c0-4 3-5 6-5s6 1 6 5" /></svg>
          </Avatar>
          <WinSlot $w={32}>
            <svg width="16" height="16" viewBox="0 0 16 16" fill="none" stroke="#fff"><path d="M3 15l-1-3 8-9 3 3-8 8zM12 1l1 1M14 3l1 1M12 5l3-1" /></svg>
          </WinSlot>
          <WinSlot $w={44} $ml={5}><svg width="10" height="2"><path d="M0 .5h10" stroke="#fff" /></svg></WinSlot>
          <WinSlot $w={44}><svg width="11" height="11" viewBox="0 0 11 11" fill="none" stroke="#fff"><path d="M.5 2.500h8v8h-8zM2.500 2.500v-2h8v8h-2" /></svg></WinSlot>
          <WinSlot $w={46}><svg width="11" height="11" viewBox="0 0 11 11" fill="none" stroke="#fff"><path d="M.5 .5l10 10M10.500 .5l-10 10" /></svg></WinSlot>
        </TitleRight>
      </TitleBar>

      <TabBar>
        {TABS.map(([t, w, latin]) => <TabSlot key={t} $w={w}><Tab $active={t === 'ホーム'} $latin={latin}>{t}</Tab></TabSlot>)}
        <TabActions>
          <CommentBtn>
            <svg width="12" height="11" viewBox="0 0 12 11" fill="none" stroke="#333"><path d="M.5 .5h11v7H4l-2 2v-2H.5z" /></svg>
            コメント
          </CommentBtn>
          <ShareBtn>
            <svg width="12" height="12" viewBox="0 0 12 12" fill="none" stroke="#fff"><path d="M7 4H1v7h8V8M5 7c0-3 2-4 4-4V1l3 3-3 3V5C7 5 6 6 5 7z" /></svg>
            共有
          </ShareBtn>
        </TabActions>
      </TabBar>

      <RibbonPanel />

      <FormulaBar>
        <NameBox>A4<Chev /></NameBox>
        <Grip>⋮</Grip>
        <FxBox>
          <svg width="14" height="13" viewBox="0 0 14 13" fill="none" stroke="#bbb"><path d="M1 1l11 11M12 1L1 12" /></svg>
          <svg width="15" height="12" viewBox="0 0 15 12" fill="none" stroke="#bbb"><path d="M1 6l4 5L14 1" /></svg>
          <Fx>fx</Fx>
        </FxBox>
        <FormulaInput>2022/2/3<Chev /></FormulaInput>
      </FormulaBar>

      <SheetArea>
        <SheetGrid />
        <VScroll>
          <svg width="9" height="6"><path d="M0 6l4.500-5L9 6z" fill="#666" /></svg>
          <VThumb />
          <VSpace />
          <svg width="9" height="6" style={{ marginBottom: 3 }}><path d="M0 0l4.500 5L9 0z" fill="#666" /></svg>
        </VScroll>
      </SheetArea>

      <SheetTabs>
        <NavArrows>
          <svg width="6" height="9"><path d="M6 0L1 4.500 6 9z" fill="#c4c4c4" /></svg>
          <svg width="6" height="9"><path d="M0 0l5 4.500L0 9z" fill="#c4c4c4" /></svg>
        </NavArrows>
        <SheetTab>物品管理表</SheetTab>
        <AddSheet>+</AddSheet>
        <TabGrip>⋮</TabGrip>
        <HScroll>
          <svg width="6" height="9"><path d="M6 0L1 4.500 6 9z" fill="#444" /></svg>
          <HThumb />
          <ArrowRight width="6" height="9"><path d="M0 0l5 4.500L0 9z" fill="#444" /></ArrowRight>
        </HScroll>
      </SheetTabs>

      <StatusBar>
        準備完了
        <StatusIcon $ml={20}>
          <svg width="14" height="13" viewBox="0 0 14 13" fill="none" stroke="#444"><path d="M.5 .5h13v12H.5zM.5 3h13" /><circle cx="8" cy="8" r="2.500" /><path d="M2 6h3M2 9h3" /></svg>
        </StatusIcon>
        <StatusIcon $ml={17} $mr={3}>
          <svg width="14" height="14" viewBox="0 0 14 14" fill="none" stroke="#444"><circle cx="6" cy="2.500" r="1.500" /><path d="M1 4.500l5 1 5-1M6 5.500v3l-3 5M6 8.500l2 2" /><path d="M10 9l3 4M13 9l-3 4" /></svg>
        </StatusIcon>
        アクセシビリティ: 検討が必要です
        <StatusRight>
          <Stats>
            <span>平均: 1933/9/21</span>
            <span>データの個数: 8</span>
            <span>最小値: 1900/1/30</span>
            <span>合計: 2034/11/27</span>
          </Stats>
          <ViewBtn $w={24} $active><svg width="12" height="12" viewBox="0 0 12 12" fill="none" stroke="#444"><path d="M.5 .5h11v11H.5zM4 .5v11M8 .5v11M.5 4h11M.5 8h11" /></svg></ViewBtn>
          <ViewBtn $w={50}><svg width="12" height="13" viewBox="0 0 12 13" fill="none" stroke="#444"><path d="M.5 .5h11v12H.5zM3.500 3.500h5v6h-5z" /></svg></ViewBtn>
          <ViewBtn $w={28}><svg width="12" height="12" viewBox="0 0 12 12" fill="none" stroke="#444"><path d="M.5 .5h11v11H.5zM4 .5v6h4v-6" /></svg></ViewBtn>
          <ZoomSign $ml={11}>−</ZoomSign>
          <Slider />
          <ZoomSign>+</ZoomSign>
          <Zoom>100%</Zoom>
        </StatusRight>
      </StatusBar>

      <RedFrame $x={22} $y={298} $w={1240} $h={34} />
      <RedFrame $x={52} $y={42} $w={54} $h={39} />
      <RedFrame $x={944} $y={73} $w={63} $h={30} />
      <Badge $x={140} $y={48}>2</Badge>
      <Badge $x={497} $y={363}>1</Badge>
      <Badge $x={910} $y={88}>3</Badge>
    </Page>
  );
}
